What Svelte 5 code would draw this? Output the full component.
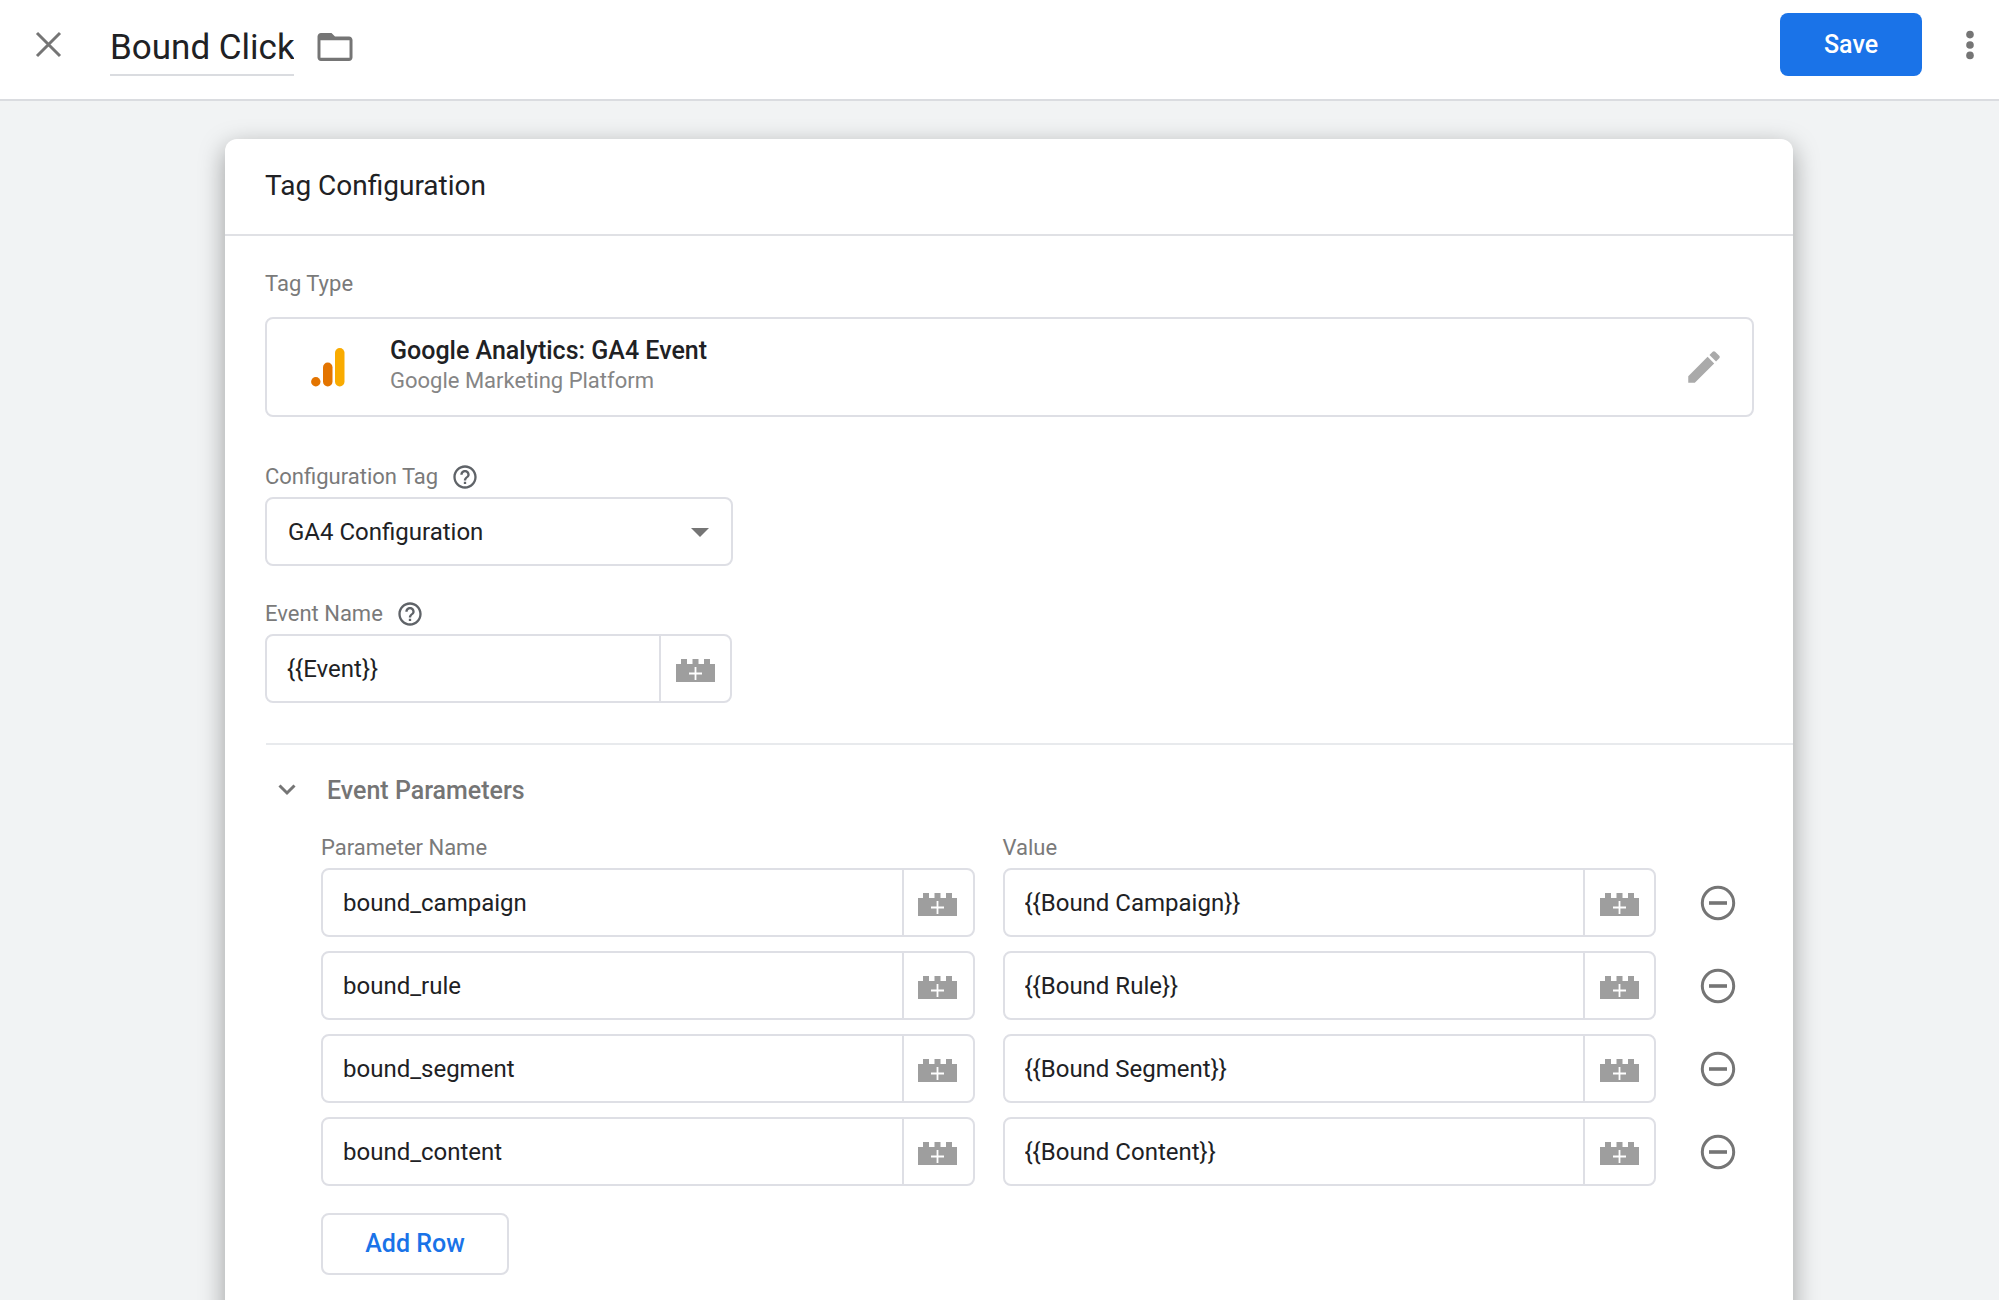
<script lang="ts">
	type Param = { name: string; value: string };

	let tagName = $state('Bound Click');
	let configTag = $state('GA4 Configuration');
	let eventName = $state('{{Event}}');
	let expanded = $state(true);
	let params: Param[] = $state([
		{ name: 'bound_campaign', value: '{{Bound Campaign}}' },
		{ name: 'bound_rule', value: '{{Bound Rule}}' },
		{ name: 'bound_segment', value: '{{Bound Segment}}' },
		{ name: 'bound_content', value: '{{Bound Content}}' }
	]);

	function addRow() {
		params.push({ name: '', value: '' });
	}

	function removeRow(index: number) {
		params.splice(index, 1);
	}
</script>

{#snippet brick()}
	<button class="variable" type="button" aria-label="Insert variable">
		<svg width="39" height="23" viewBox="0 0 39 23" aria-hidden="true">
			<path fill="#9e9e9e" d="M0 5h5V0h6v5h5.500V0h6v5H28V0h6v5h5v18H0z" />
			<path stroke="#fff" stroke-width="1.800" d="M19.500 8v13M13 14.500h13" />
		</svg>
	</button>
{/snippet}

{#snippet help(topic: string)}
	<button class="icon-button" type="button" aria-label={`Help: ${topic}`}>
		<svg width="28" height="28" viewBox="0 0 24 24" fill="#5f6368" aria-hidden="true">
			<path d="M11 18h2v-2h-2v2zm1-16C6.48 2 2 6.48 2 12s4.48 10 10 10 10-4.48 10-10S17.52 2 12 2zm0 18c-4.41 0-8-3.59-8-8s3.59-8 8-8 8 3.59 8 8-3.59 8-8 8zm0-14c-2.21 0-4 1.79-4 4h2c0-1.1.9-2 2-2s2 .9 2 2c0 2-3 1.75-3 5h2c0-2.25 3-2.5 3-5 0-2.21-1.79-4-4-4z" />
		</svg>
	</button>
{/snippet}

<div class="page">
	<header class="topbar">
		<button class="icon-button" type="button" aria-label="Close">
			<svg width="42" height="42" viewBox="0 0 42 42" aria-hidden="true">
				<path stroke="#757575" stroke-width="3" d="M9 9l23 23M32 9l-23 23" />
			</svg>
		</button>
		<input class="tag-name" aria-label="Tag name" bind:value={tagName} />
		<button class="icon-button folder" type="button" aria-label="Move to folder">
			<svg width="42" height="42" viewBox="0 0 24 24" fill="#757575" aria-hidden="true">
				<path d="M20 6h-8l-2-2H4c-1.1 0-1.99.9-1.99 2L2 18c0 1.1.9 2 2 2h16c1.1 0 2-.9 2-2V8c0-1.1-.9-2-2-2zm.3 12.200H3.700V8.100h16.600z" />
			</svg>
		</button>
		<button class="save" type="button">Save</button>
		<button class="icon-button" type="button" aria-label="More actions">
			<svg width="42" height="42" viewBox="0 0 42 42" fill="#757575" aria-hidden="true">
				<circle cx="21" cy="10.600" r="3.800" />
				<circle cx="21" cy="21" r="3.800" />
				<circle cx="21" cy="31.400" r="3.800" />
			</svg>
		</button>
	</header>

	<main>
		<section class="card">
			<h1>Tag Configuration</h1>

			<div class="body">
				<div class="label-row">Tag Type</div>
				<div class="tag-type">
					<svg width="34" height="40" viewBox="0 0 34 40" aria-hidden="true">
						<rect x="24" y="1" width="9.500" height="38.500" rx="4.700" fill="#f9ab00" />
						<rect x="12" y="15.500" width="9.500" height="24" rx="4.700" fill="#e37400" />
						<circle cx="4.800" cy="34.800" r="4.700" fill="#e37400" />
					</svg>
					<div class="tag-text">
						<div class="tag-title">Google Analytics: GA4 Event</div>
						<div class="tag-vendor">Google Marketing Platform</div>
					</div>
					<button class="icon-button" type="button" aria-label="Edit tag type">
						<svg width="42" height="42" viewBox="0 0 24 24" fill="#aaa" aria-hidden="true">
							<path d="M3 17.25V21h3.75L17.81 9.94l-3.75-3.75L3 17.25zM20.71 7.04c.39-.39.39-1.02 0-1.41l-2.34-2.34c-.39-.39-1.02-.39-1.41 0l-1.83 1.83 3.75 3.75 1.83-1.83z" />
						</svg>
					</button>
				</div>

				<div class="label-row config">
					<label for="config-tag">Configuration Tag</label>
					{@render help('Configuration Tag')}
				</div>
				<div class="select">
					<select id="config-tag" bind:value={configTag}>
						<option>GA4 Configuration</option>
					</select>
					<svg class="arrow" width="18" height="9" viewBox="0 0 18 9" aria-hidden="true">
						<path fill="#757575" d="M0 0h18L9 9z" />
					</svg>
				</div>

				<div class="label-row event">
					<label for="event-name">Event Name</label>
					{@render help('Event Name')}
				</div>
				<div class="field short">
					<input id="event-name" bind:value={eventName} />
					{@render brick()}
				</div>
			</div>

			<div class="parameters">
				<button class="toggle" type="button" aria-expanded={expanded} onclick={() => (expanded = !expanded)}>
					<svg class:collapsed={!expanded} width="18" height="14" viewBox="0 0 18 14" aria-hidden="true">
						<path fill="none" stroke="#757575" stroke-width="3" d="M1.500 1.500L9 9l7.500-7.500" />
					</svg>
					<span>Event Parameters</span>
				</button>

				{#if expanded}
					<div class="grid">
						<label class="col-label" for="name-0">Parameter Name</label>
						<label class="col-label value-label" for="value-0">Value</label>
						{#each params as param, i}
							<div class="field">
								<input id={`name-${i}`} aria-label="Parameter Name" bind:value={param.name} />
								{@render brick()}
							</div>
							<div class="field">
								<input id={`value-${i}`} aria-label="Value" bind:value={param.value} />
								{@render brick()}
							</div>
							<button class="icon-button remove" type="button" aria-label="Remove row" onclick={() => removeRow(i)}>
								<svg width="36" height="36" viewBox="0 0 36 36" aria-hidden="true">
									<circle cx="18" cy="18" r="15.700" fill="none" stroke="#757575" stroke-width="3" />
									<path stroke="#757575" stroke-width="3.600" d="M9 18h18" />
								</svg>
							</button>
						{/each}
					</div>
					<button class="add-row" type="button" onclick={addRow}>Add Row</button>
				{/if}
			</div>
		</section>
	</main>
</div>

<style>
	:global(body) {
		background: #f1f3f4;
	}

	.page {
		display: flex;
		flex-direction: column;
		min-height: 100vh;
		font-family: Roboto, 'Liberation Sans', sans-serif;
		font-size: 24px;
		line-height: 28px;
		color: #202124;
	}

	button,
	input,
	select {
		font: inherit;
		color: inherit;
		margin: 0;
		padding: 0;
		border: none;
		background: none;
		box-sizing: border-box;
	}

	button {
		cursor: pointer;
	}

	svg {
		display: block;
	}

	.icon-button {
		display: flex;
		flex-shrink: 0;
	}

	.topbar {
		display: flex;
		align-items: center;
		padding: 13px 8px 23px 28px;
		background: #fff;
		border-bottom: 2px solid #dadce0;
	}

	.tag-name {
		width: 184px;
		height: 56px;
		margin: 7px 0 0 40px;
		border-bottom: 2px solid #dadce0;
		font-family: 'Google Sans', Roboto, sans-serif;
		font-size: 35px;
	}

	.folder {
		margin: 4px 0 0 20px;
	}

	.save {
		width: 142px;
		height: 63px;
		margin: 0 27px 0 auto;
		border-radius: 8px;
		background: #1a73e8;
		color: #fff;
		font-family: 'Google Sans', Roboto, sans-serif;
		font-size: 25px;
		font-weight: 500;
	}

	main {
		flex: 1;
		display: flex;
		padding: 38px 206px 0 225px;
		overflow: hidden;
	}

	/* runs past the bottom of the view so the side shadows don't fade out */
	.card {
		flex: 1;
		min-width: 0;
		margin-bottom: -60px;
		padding-bottom: 60px;
		border-radius: 12px;
		background: #fff;
		box-shadow: 0 8px 26px rgba(0, 0, 0, 0.36);
	}

	h1 {
		margin: 0;
		padding: 27px 40px 28px;
		border-bottom: 2px solid #e0e1e5;
		font-family: 'Google Sans', Roboto, sans-serif;
		font-size: 28px;
		line-height: 40px;
		font-weight: 400;
	}

	.body {
		padding: 34px 39px 40px 40px;
	}

	.label-row {
		display: flex;
		align-items: center;
		gap: 13px;
		height: 28px;
		font-size: 22px;
		color: #7a7a7a;
	}

	.config {
		margin-top: 46px;
	}

	.event {
		margin-top: 34px;
	}

	.tag-type {
		display: flex;
		align-items: center;
		height: 100px;
		margin-top: 19px;
		padding: 0 27px 0 44px;
		box-sizing: border-box;
		border: 2px solid #dedfe5;
		border-radius: 8px;
	}

	.tag-text {
		flex: 1;
		margin-left: 45px;
		padding-bottom: 4px;
	}

	.tag-title {
		font-size: 25px;
		font-weight: 500;
		line-height: 32px;
	}

	.tag-vendor {
		font-size: 22px;
		color: #858585;
	}

	.select {
		position: relative;
		width: 468px;
		max-width: 100%;
		margin-top: 6px;
	}

	select {
		appearance: none;
		display: block;
		width: 100%;
		height: 69px;
		padding: 0 60px 0 21px;
		border: 2px solid #dedfe5;
		border-radius: 8px;
	}

	.arrow {
		position: absolute;
		top: 31px;
		right: 24px;
		pointer-events: none;
	}

	.field {
		display: flex;
		height: 69px;
		box-sizing: border-box;
		border: 2px solid #dedfe5;
		border-radius: 8px;
	}

	.field input {
		flex: 1;
		min-width: 0;
		padding: 0 20px;
	}

	.short {
		width: 467px;
		max-width: 100%;
		margin-top: 6px;
	}

	.variable {
		display: flex;
		align-items: center;
		justify-content: center;
		width: 71px;
		padding: 3px 1px 0 0;
		border-left: 2px solid #dedfe5;
	}

	.parameters {
		margin-left: 41px;
		padding: 32px 57px 40px 0;
		border-top: 2px solid #e8eaed;
	}

	.toggle {
		display: flex;
		align-items: center;
		gap: 31px;
		padding-left: 12px;
		color: #757575;
		font-size: 25px;
		font-weight: 500;
	}

	.collapsed {
		transform: rotate(-90deg);
	}

	.grid {
		display: grid;
		grid-template-columns: 1fr 1fr 52px;
		gap: 14px 28px;
		margin: 29px 0 27px 55px;
	}

	.col-label {
		font-size: 22px;
		margin-bottom: -8px;
		color: #7a7a7a;
	}

	.value-label {
		grid-column: 2 / 4;
	}

	.remove {
		align-self: center;
		justify-content: flex-end;
	}

	.add-row {
		width: 188px;
		height: 62px;
		margin-left: 55px;
		border: 2px solid #dedfe5;
		border-radius: 8px;
		color: #1a73e8;
		font-family: 'Google Sans', Roboto, sans-serif;
		font-size: 25px;
		font-weight: 500;
	}
</style>
